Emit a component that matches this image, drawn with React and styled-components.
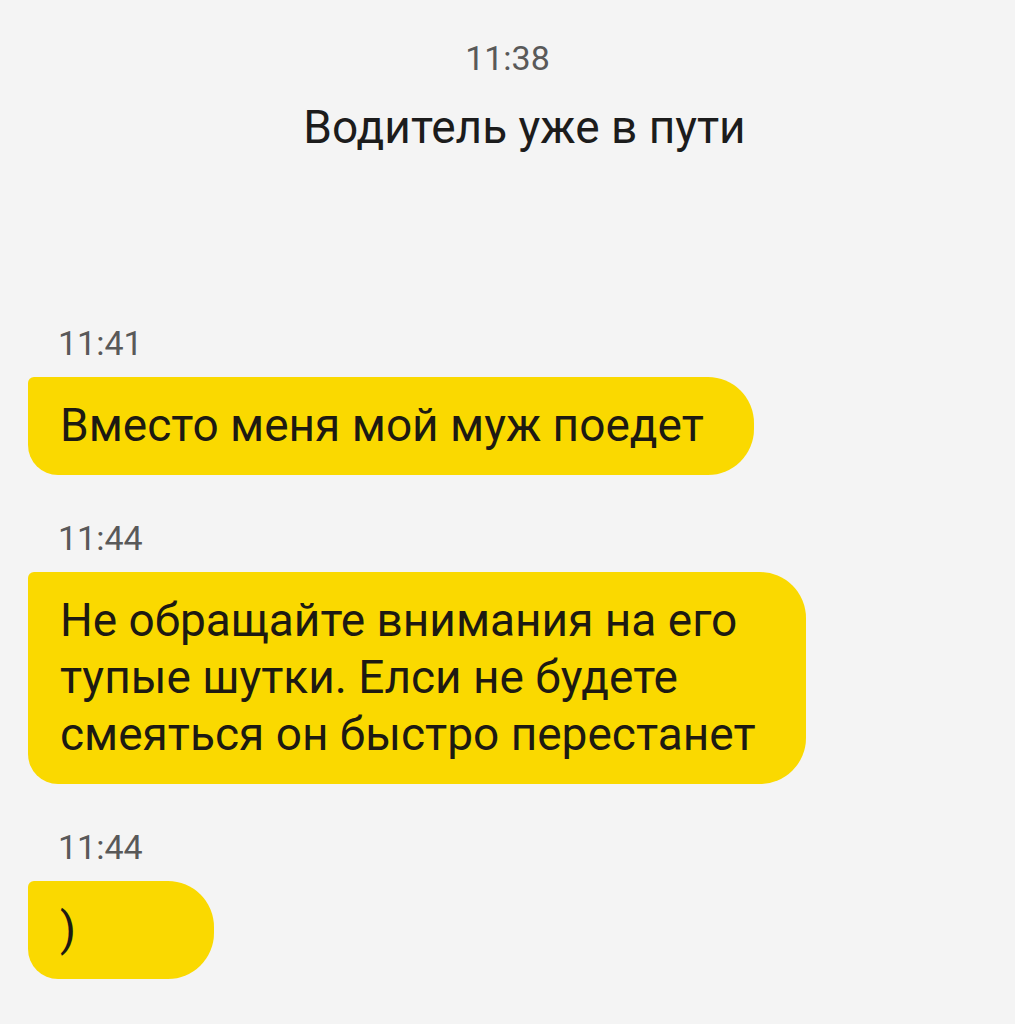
import React from 'react';
import styled, { createGlobalStyle } from 'styled-components';

const GlobalStyle = createGlobalStyle`
  html, body {
    margin: 0;
    padding: 0;
    background: #f4f4f4;
  }
  body {
    font-family: Roboto, "Noto Sans", sans-serif;
  }
`;

const Screen = styled.div`
  width: 1015px;
  height: 1024px;
  overflow: hidden;
  background: #f4f4f4;
  display: flex;
  flex-direction: column;
`;

const Header = styled.header`
  display: flex;
  flex-direction: column;
  align-items: center;
  padding-top: 41px;
  gap: 25px;
`;

const Stamp = styled.div`
  font-size: 34px;
  line-height: 34px;
  color: #595959;
  padding-left: ${(p) => p.$indent || 0}px;
`;

const Title = styled.div`
  font-size: 46px;
  line-height: 54px;
  color: #1c1c1c;
  padding-left: 34px;
`;

const Feed = styled.div`
  display: flex;
  flex-direction: column;
  align-items: flex-start;
  gap: 46px;
  padding: 172px 0 0 28px;
`;

const Message = styled.div`
  display: flex;
  flex-direction: column;
  align-items: flex-start;
  gap: 17px;
`;

const Bubble = styled.div`
  background: #fad900;
  color: #1d1a12;
  font-size: 46px;
  line-height: 57px;
  padding: 20px 50px 21px 32px;
  border-radius: 6px 46px 46px 30px;
  min-width: ${(p) => p.$minWidth || 0}px;
  box-sizing: border-box;
`;

const messages = [
  { time: '11:41', lines: ['Вместо меня мой муж поедет'] },
  {
    time: '11:44',
    lines: [
      'Не обращайте внимания на его',
      'тупые шутки. Елси не будете',
      'смеяться он быстро перестанет',
    ],
  },
  { time: '11:44', lines: [')'], minWidth: 186 },
];

export default function App() {
  return (
    <Screen>
      <GlobalStyle />
      <Header>
        <Stamp>11:38</Stamp>
        <Title>Водитель уже в пути</Title>
      </Header>
      <Feed>
        {messages.map((m, i) => (
          <Message key={i}>
            <Stamp $indent={30}>{m.time}</Stamp>
            <Bubble $minWidth={m.minWidth}>
              {m.lines.map((line, j) => (
                <div key={j}>{line}</div>
              ))}
            </Bubble>
          </Message>
        ))}
      </Feed>
    </Screen>
  );
}
